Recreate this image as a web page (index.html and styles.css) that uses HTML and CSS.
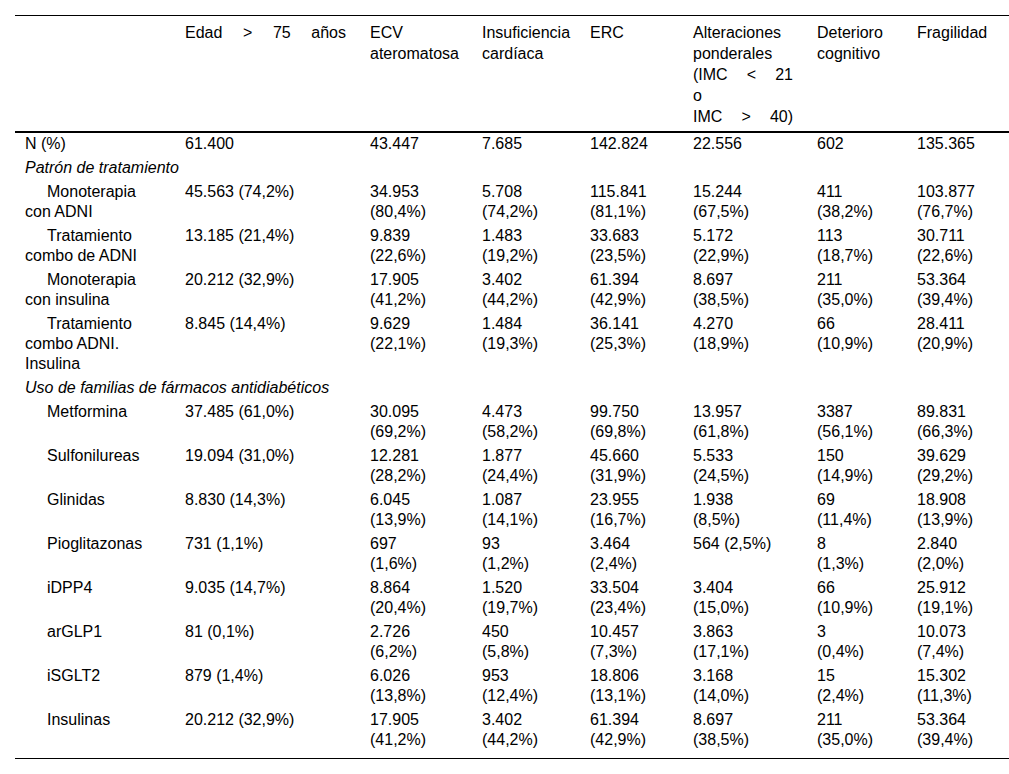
FILE: index.html
```html
<!DOCTYPE html>
<html lang="es">
<head>
<meta charset="utf-8">
<title>Tabla</title>
<link rel="stylesheet" href="styles.css">
</head>
<body>
<table class="data">
  <colgroup>
    <col class="c1"><col class="c2"><col class="c3"><col class="c4"><col class="c5"><col class="c6"><col class="c7"><col class="c8">
  </colgroup>
  <thead>
    <tr>
      <th class="label"></th>
      <th>Edad &gt; 75 años</th>
      <th>ECV ateromatosa</th>
      <th>Insuficiencia cardíaca</th>
      <th>ERC</th>
      <th>Alteraciones ponderales<br>(IMC &lt; 21<br>o<br>IMC &gt; 40)</th>
      <th>Deterioro cognitivo</th>
      <th>Fragilidad</th>
    </tr>
  </thead>
  <tbody>
    <tr>
      <td class="label">N (%)</td>
      <td>61.400</td><td>43.447</td><td>7.685</td><td>142.824</td><td>22.556</td><td>602</td><td>135.365</td>
    </tr>
    <tr class="section"><td colspan="8">Patrón de tratamiento</td></tr>
    <tr>
      <td class="label sub">Monoterapia con ADNI</td>
      <td>45.563 (74,2%)</td><td>34.953<br>(80,4%)</td><td>5.708<br>(74,2%)</td><td>115.841<br>(81,1%)</td><td>15.244<br>(67,5%)</td><td>411<br>(38,2%)</td><td>103.877<br>(76,7%)</td>
    </tr>
    <tr>
      <td class="label sub">Tratamiento combo de ADNI</td>
      <td>13.185 (21,4%)</td><td>9.839<br>(22,6%)</td><td>1.483<br>(19,2%)</td><td>33.683<br>(23,5%)</td><td>5.172<br>(22,9%)</td><td>113<br>(18,7%)</td><td>30.711<br>(22,6%)</td>
    </tr>
    <tr>
      <td class="label sub">Monoterapia con insulina</td>
      <td>20.212 (32,9%)</td><td>17.905<br>(41,2%)</td><td>3.402<br>(44,2%)</td><td>61.394<br>(42,9%)</td><td>8.697<br>(38,5%)</td><td>211<br>(35,0%)</td><td>53.364<br>(39,4%)</td>
    </tr>
    <tr>
      <td class="label sub">Tratamiento combo ADNI. Insulina</td>
      <td>8.845 (14,4%)</td><td>9.629<br>(22,1%)</td><td>1.484<br>(19,3%)</td><td>36.141<br>(25,3%)</td><td>4.270<br>(18,9%)</td><td>66<br>(10,9%)</td><td>28.411<br>(20,9%)</td>
    </tr>
    <tr class="section"><td colspan="8">Uso de familias de fármacos antidiabéticos</td></tr>
    <tr>
      <td class="label sub">Metformina</td>
      <td>37.485 (61,0%)</td><td>30.095<br>(69,2%)</td><td>4.473<br>(58,2%)</td><td>99.750<br>(69,8%)</td><td>13.957<br>(61,8%)</td><td>3387<br>(56,1%)</td><td>89.831<br>(66,3%)</td>
    </tr>
    <tr>
      <td class="label sub">Sulfonilureas</td>
      <td>19.094 (31,0%)</td><td>12.281<br>(28,2%)</td><td>1.877<br>(24,4%)</td><td>45.660<br>(31,9%)</td><td>5.533<br>(24,5%)</td><td>150<br>(14,9%)</td><td>39.629<br>(29,2%)</td>
    </tr>
    <tr>
      <td class="label sub">Glinidas</td>
      <td>8.830 (14,3%)</td><td>6.045<br>(13,9%)</td><td>1.087<br>(14,1%)</td><td>23.955<br>(16,7%)</td><td>1.938<br>(8,5%)</td><td>69<br>(11,4%)</td><td>18.908<br>(13,9%)</td>
    </tr>
    <tr>
      <td class="label sub">Pioglitazonas</td>
      <td>731 (1,1%)</td><td>697<br>(1,6%)</td><td>93<br>(1,2%)</td><td>3.464<br>(2,4%)</td><td>564 (2,5%)</td><td>8<br>(1,3%)</td><td>2.840<br>(2,0%)</td>
    </tr>
    <tr>
      <td class="label sub">iDPP4</td>
      <td>9.035 (14,7%)</td><td>8.864<br>(20,4%)</td><td>1.520<br>(19,7%)</td><td>33.504<br>(23,4%)</td><td>3.404<br>(15,0%)</td><td>66<br>(10,9%)</td><td>25.912<br>(19,1%)</td>
    </tr>
    <tr>
      <td class="label sub">arGLP1</td>
      <td>81 (0,1%)</td><td>2.726<br>(6,2%)</td><td>450<br>(5,8%)</td><td>10.457<br>(7,3%)</td><td>3.863<br>(17,1%)</td><td>3<br>(0,4%)</td><td>10.073<br>(7,4%)</td>
    </tr>
    <tr>
      <td class="label sub">iSGLT2</td>
      <td>879 (1,4%)</td><td>6.026<br>(13,8%)</td><td>953<br>(12,4%)</td><td>18.806<br>(13,1%)</td><td>3.168<br>(14,0%)</td><td>15<br>(2,4%)</td><td>15.302<br>(11,3%)</td>
    </tr>
    <tr class="last">
      <td class="label sub">Insulinas</td>
      <td>20.212 (32,9%)</td><td>17.905<br>(41,2%)</td><td>3.402<br>(44,2%)</td><td>61.394<br>(42,9%)</td><td>8.697<br>(38,5%)</td><td>211<br>(35,0%)</td><td>53.364<br>(39,4%)</td>
    </tr>
  </tbody>
</table>
</body>
</html>
```

FILE: styles.css
```css
html, body {
  margin: 0;
  padding: 0;
  background: #fff;
}

body {
  font-family: "Liberation Sans", Arial, sans-serif;
  font-size: 16px;
  color: #000;
}

.data {
  margin: 15px 0 0 15px;
  width: 994px;
  table-layout: fixed;
  border-collapse: separate;
  border-spacing: 0;
}

.c1 { width: 160px; }
.c2 { width: 185px; }
.c3 { width: 112px; }
.c4 { width: 108px; }
.c5 { width: 103px; }
.c6 { width: 124px; }
.c7 { width: 100px; }
.c8 { width: 102px; }

.data th {
  font-weight: normal;
  vertical-align: top;
  text-align: justify;
  text-align-last: justify;
  line-height: 21px;
  padding: 6px 14px 4px 10px;
  border-top: 1px solid #000;
  border-bottom: 2px solid #000;
}

.data td {
  vertical-align: top;
  text-align: left;
  line-height: 20px;
  padding: 1px 14px 3px 10px;
}

.data td.sub {
  text-indent: 22px;
}

.section td {
  font-style: italic;
}

.last td {
  padding-bottom: 8px;
  border-bottom: 1px solid #000;
}
```
